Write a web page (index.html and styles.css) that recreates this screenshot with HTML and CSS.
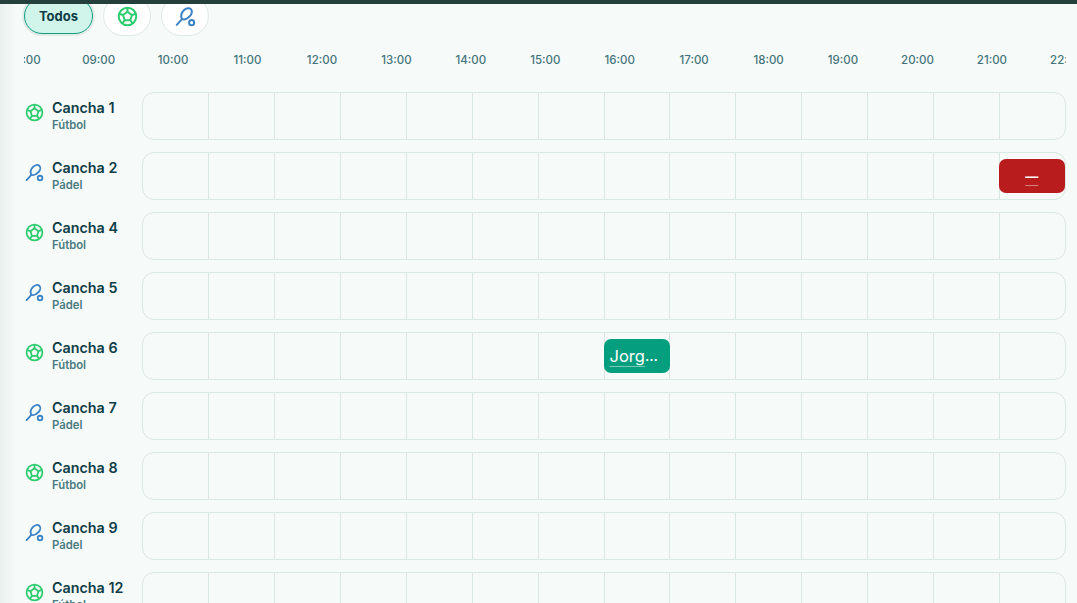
FILE: index.html
```html
<!DOCTYPE html>
<html lang="es">
<head>
<meta charset="utf-8">
<title>Canchas</title>
<link rel="stylesheet" href="styles.css">
</head>
<body>
<div class="topbar"></div>
<div class="page">
  <div class="filters">
    <button class="chip active">Todos</button>
    <button class="chip icon"><svg class="ico" viewBox="0 0 24 24"><use href="#ball"/></svg></button>
    <button class="chip icon"><svg class="ico" viewBox="0 0 24 24"><use href="#racket"/></svg></button>
  </div>
  <div class="hours">
    <span>08:00</span><span>09:00</span><span>10:00</span><span>11:00</span><span>12:00</span><span>13:00</span><span>14:00</span><span>15:00</span><span>16:00</span><span>17:00</span><span>18:00</span><span>19:00</span><span>20:00</span><span>21:00</span><span>22:00</span>
  </div>
  <div class="rows">
    <div class="row"><div class="court"><svg class="ico" viewBox="0 0 24 24"><use href="#ball"/></svg><div class="court-text"><div class="name">Cancha 1</div><div class="sport">Fútbol</div></div></div><div class="track"><div class="slot"></div><div class="slot"></div><div class="slot"></div><div class="slot"></div><div class="slot"></div><div class="slot"></div><div class="slot"></div><div class="slot"></div><div class="slot"></div><div class="slot"></div><div class="slot"></div><div class="slot"></div><div class="slot"></div><div class="slot"></div></div></div>
    <div class="row"><div class="court"><svg class="ico" viewBox="0 0 24 24"><use href="#racket"/></svg><div class="court-text"><div class="name">Cancha 2</div><div class="sport">Pádel</div></div></div><div class="track"><div class="slot"></div><div class="slot"></div><div class="slot"></div><div class="slot"></div><div class="slot"></div><div class="slot"></div><div class="slot"></div><div class="slot"></div><div class="slot"></div><div class="slot"></div><div class="slot"></div><div class="slot"></div><div class="slot"></div><div class="slot"><div class="booking red"><span class="label">—</span></div></div></div></div>
    <div class="row"><div class="court"><svg class="ico" viewBox="0 0 24 24"><use href="#ball"/></svg><div class="court-text"><div class="name">Cancha 4</div><div class="sport">Fútbol</div></div></div><div class="track"><div class="slot"></div><div class="slot"></div><div class="slot"></div><div class="slot"></div><div class="slot"></div><div class="slot"></div><div class="slot"></div><div class="slot"></div><div class="slot"></div><div class="slot"></div><div class="slot"></div><div class="slot"></div><div class="slot"></div><div class="slot"></div></div></div>
    <div class="row"><div class="court"><svg class="ico" viewBox="0 0 24 24"><use href="#racket"/></svg><div class="court-text"><div class="name">Cancha 5</div><div class="sport">Pádel</div></div></div><div class="track"><div class="slot"></div><div class="slot"></div><div class="slot"></div><div class="slot"></div><div class="slot"></div><div class="slot"></div><div class="slot"></div><div class="slot"></div><div class="slot"></div><div class="slot"></div><div class="slot"></div><div class="slot"></div><div class="slot"></div><div class="slot"></div></div></div>
    <div class="row"><div class="court"><svg class="ico" viewBox="0 0 24 24"><use href="#ball"/></svg><div class="court-text"><div class="name">Cancha 6</div><div class="sport">Fútbol</div></div></div><div class="track"><div class="slot"></div><div class="slot"></div><div class="slot"></div><div class="slot"></div><div class="slot"></div><div class="slot"></div><div class="slot"></div><div class="slot"><div class="booking green"><span class="label">Jorg</span><span class="dots">…</span></div></div><div class="slot"></div><div class="slot"></div><div class="slot"></div><div class="slot"></div><div class="slot"></div><div class="slot"></div></div></div>
    <div class="row"><div class="court"><svg class="ico" viewBox="0 0 24 24"><use href="#racket"/></svg><div class="court-text"><div class="name">Cancha 7</div><div class="sport">Pádel</div></div></div><div class="track"><div class="slot"></div><div class="slot"></div><div class="slot"></div><div class="slot"></div><div class="slot"></div><div class="slot"></div><div class="slot"></div><div class="slot"></div><div class="slot"></div><div class="slot"></div><div class="slot"></div><div class="slot"></div><div class="slot"></div><div class="slot"></div></div></div>
    <div class="row"><div class="court"><svg class="ico" viewBox="0 0 24 24"><use href="#ball"/></svg><div class="court-text"><div class="name">Cancha 8</div><div class="sport">Fútbol</div></div></div><div class="track"><div class="slot"></div><div class="slot"></div><div class="slot"></div><div class="slot"></div><div class="slot"></div><div class="slot"></div><div class="slot"></div><div class="slot"></div><div class="slot"></div><div class="slot"></div><div class="slot"></div><div class="slot"></div><div class="slot"></div><div class="slot"></div></div></div>
    <div class="row"><div class="court"><svg class="ico" viewBox="0 0 24 24"><use href="#racket"/></svg><div class="court-text"><div class="name">Cancha 9</div><div class="sport">Pádel</div></div></div><div class="track"><div class="slot"></div><div class="slot"></div><div class="slot"></div><div class="slot"></div><div class="slot"></div><div class="slot"></div><div class="slot"></div><div class="slot"></div><div class="slot"></div><div class="slot"></div><div class="slot"></div><div class="slot"></div><div class="slot"></div><div class="slot"></div></div></div>
    <div class="row"><div class="court"><svg class="ico" viewBox="0 0 24 24"><use href="#ball"/></svg><div class="court-text"><div class="name">Cancha 12</div><div class="sport">Fútbol</div></div></div><div class="track"><div class="slot"></div><div class="slot"></div><div class="slot"></div><div class="slot"></div><div class="slot"></div><div class="slot"></div><div class="slot"></div><div class="slot"></div><div class="slot"></div><div class="slot"></div><div class="slot"></div><div class="slot"></div><div class="slot"></div><div class="slot"></div></div></div>
  </div>
</div>
<svg class="defs" aria-hidden="true">
  <symbol id="ball" viewBox="0 0 24 24">
    <g fill="none" stroke="#2ecc71" stroke-width="2.300" stroke-linejoin="round" stroke-linecap="round">
      <circle cx="12" cy="12" r="10"/>
      <path d="M12 6.600l5.100 3.700-1.900 6h-6.400l-1.900-6z"/>
      <path d="M12 6.600V2.800M17.100 10.300l3.700-1.200M15.200 16.300l2.300 3.100M8.800 16.300l-2.300 3.100M6.900 10.300L3.200 9.100"/>
    </g>
  </symbol>
  <symbol id="racket" viewBox="0 0 24 24">
    <g fill="none" stroke="#3b82c4" stroke-width="2.300" stroke-linecap="round" stroke-linejoin="round">
      <path d="M2 21.500l6-6.500"/>
      <path d="M8 15c-1.600-3.200-.6-7.500 2.200-10.200 2.600-2.500 6.200-3 8-1.200 1.800 1.800 1.300 5.400-1.200 8-2.600 2.700-6.200 4.500-9 3.400z"/>
      <circle cx="19" cy="19" r="2.900"/>
    </g>
  </symbol>
</svg>
</body>
</html>
```
FILE: styles.css
```css
html, body { margin: 0; padding: 0; height: 100%; overflow: hidden; }
body {
  background: linear-gradient(90deg, #e9f0ee 0, #f6faf9 16px, #f6faf9 100%);
  font-family: "Inter", "Open Sans", sans-serif;
  color: #0f3d47;
}
.topbar { position: relative; z-index: 1; height: 4px; background: #243f3c; }
.page { padding-left: 24px; }
.filters { display: flex; gap: 10px; height: 40px; align-items: center; margin-top: -8px; }
.chip {
  box-sizing: border-box;
  height: 40px;
  border-radius: 20px;
  border: 1px solid #dfe9e6;
  background: #fff;
  display: flex;
  align-items: center;
  justify-content: center;
  padding: 0;
  font-family: inherit;
}
.chip.icon { width: 48px; }
.chip .ico { width: 21px; height: 21px; }
.chip.active {
  width: 69px;
  height: 36px;
  background: #d1f5ea;
  border: 1px solid #0f9f80;
  box-shadow: 0 0 0 2px #e3ebe9;
  font-size: 13px;
  font-weight: 700;
  color: #0f3d47;
}
.hours {
  display: flex;
  width: 1079px;
  margin: 17px 0 0 -37px;
  height: 14px;
  clip-path: inset(0 0 0 37px);
}
.hours span {
  flex: 0 0 74.450px;
  text-align: center;
  font-size: 11.500px;
  font-weight: 500;
  line-height: 14px;
  color: #44747b;
  white-space: nowrap;
}
.rows { margin-top: 25px; display: flex; flex-direction: column; gap: 12px; }
.row { display: flex; height: 48px; align-items: stretch; }
.court { width: 118px; display: flex; align-items: center; gap: 8px; flex: none; }
.court .ico { width: 19px; height: 19px; flex: none; margin: 0 0 8px 1px; }
.court-text { margin-bottom: 2px; }
.name { font-size: 14.300px; font-weight: 600; line-height: 20px; color: #0f3d47; white-space: nowrap; }
.sport { font-size: 11.300px; font-weight: 600; line-height: 14px; color: #4a7a80; }
.track {
  box-sizing: border-box;
  width: 924px;
  flex: none;
  display: grid;
  grid-template-columns: 66.400px repeat(12, 65.860px) 1fr;
  border: 1px solid #dbe7e3;
  border-radius: 12px;
}
.slot { position: relative; border-right: 1px solid #dbe7e3; }
.slot:last-child { border-right: 0; }
.booking {
  position: absolute;
  left: -1px;
  right: -1px;
  top: 6px;
  height: 34px;
  border-radius: 7px;
  display: flex;
  align-items: center;
  box-sizing: border-box;
  padding: 0 6px;
  color: #fff;
  font-size: 16.500px;
  font-weight: 400;
  z-index: 1;
}
.slot:last-child .booking { right: 0; }
.label { text-decoration: underline; text-decoration-thickness: 1px; text-underline-offset: 4px; text-decoration-color: rgba(255,255,255,.45); }
.dots { font-size: 13.500px; font-weight: 600; }
.booking.green { background: #059f80; }
.booking.red { background: #b91c1c; justify-content: center; font-size: 13px; font-weight: 700; }
.defs { position: absolute; width: 0; height: 0; }
```
